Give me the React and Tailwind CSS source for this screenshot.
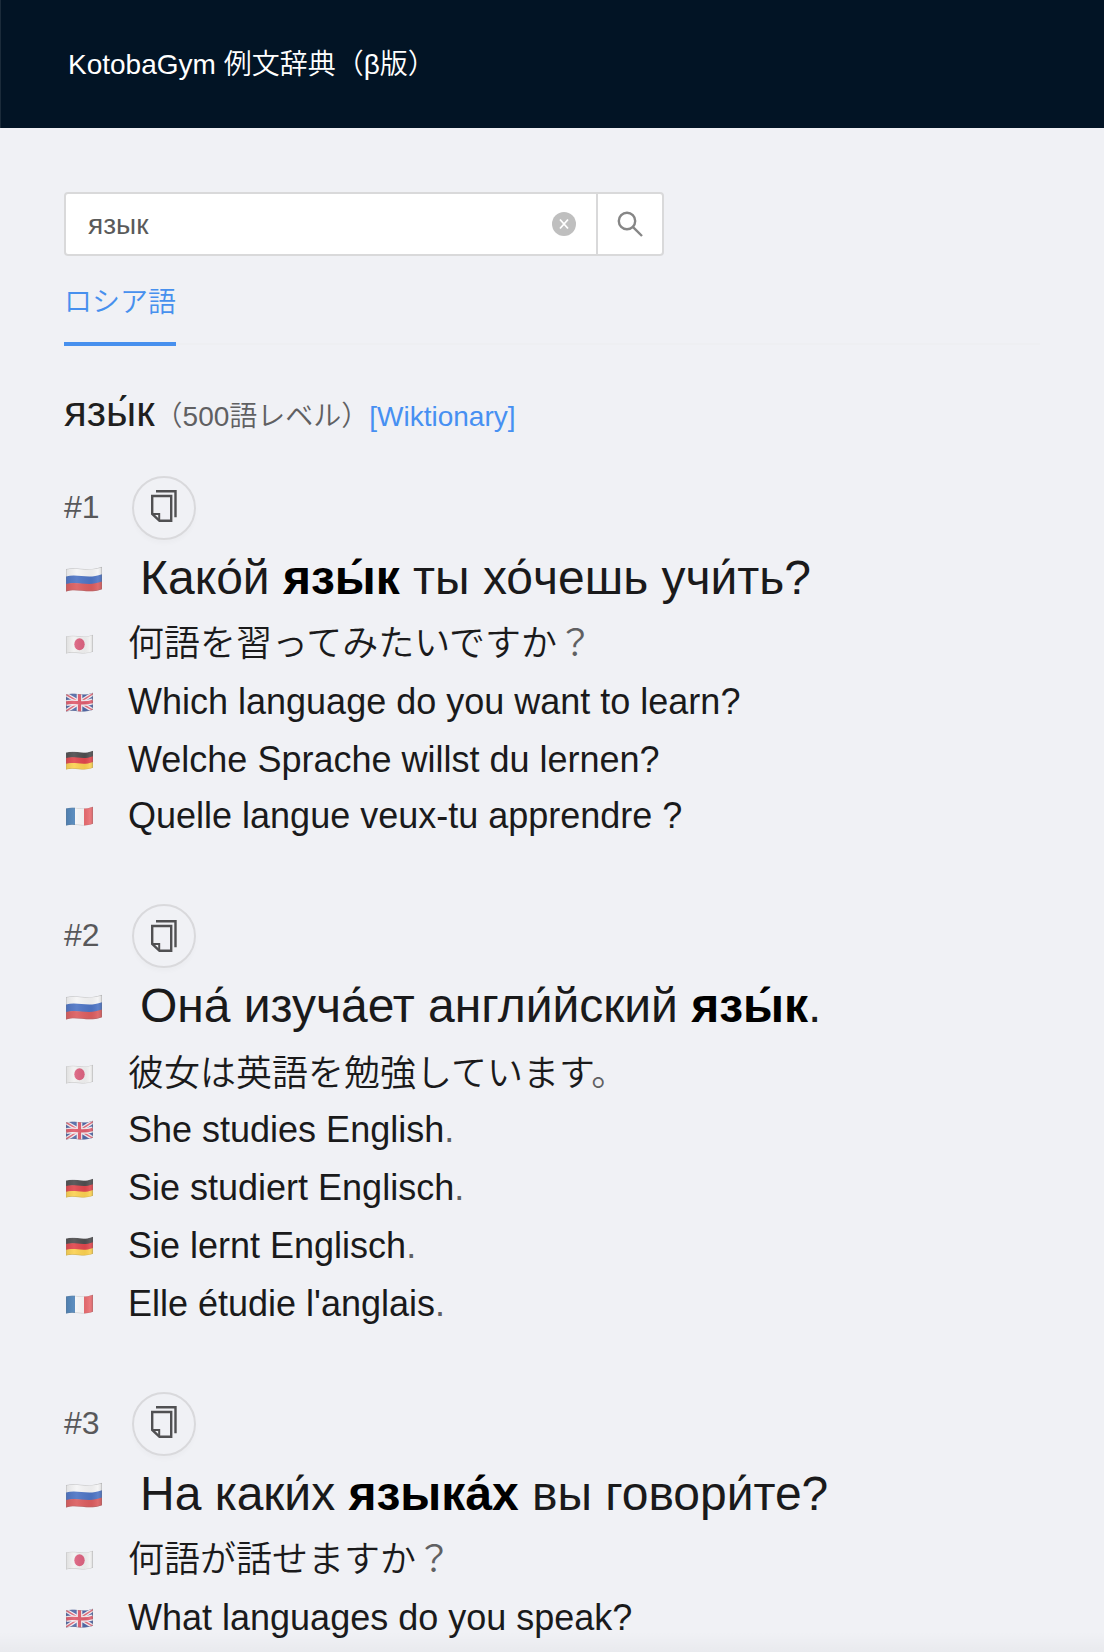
import { useState } from "react";

const entries = [
  {
    id: 1,
    russian: [{ text: "Како́й " }, { text: "язы́к", bold: true }, { text: " ты хо́чешь учи́ть?" }],
    lines: [
      { lang: "jp", text: "何語を習ってみたいですか", end: "？" },
      { lang: "gb", text: "Which language do you want to learn?" },
      { lang: "de", text: "Welche Sprache willst du lernen?" },
      { lang: "fr", text: "Quelle langue veux-tu apprendre ?", className: "-mt-0.5" },
    ],
  },
  {
    id: 2,
    russian: [{ text: "Она́ изуча́ет англи́йский " }, { text: "язы́к", bold: true }, { text: "." }],
    lines: [
      { lang: "jp", text: "彼女は英語を勉強しています", end: "。", className: "mt-0.5 -mb-0.5" },
      { lang: "gb", text: "She studies English", end: "." },
      { lang: "de", text: "Sie studiert Englisch", end: "." },
      { lang: "de", text: "Sie lernt Englisch", end: "." },
      { lang: "fr", text: "Elle étudie l'anglais", end: "." },
    ],
  },
  {
    id: 3,
    russian: [{ text: "На каки́х " }, { text: "языка́х", bold: true }, { text: " вы говори́те?" }],
    lines: [
      { lang: "jp", text: "何語が話せますか", end: "？" },
      { lang: "gb", text: "What languages do you speak?" },
    ],
  },
];

const wave = "M0 3c12-3 22 3 36-2.200v21.500c-14 5.200-24-1.500-36 2.200z";

const stripes = {
  ru: ["#f4f4f5", "#4a72c4", "#db5a5c"],
  de: ["#4b4a4c", "#e0434a", "#fbd04e"],
};

function FlagBody({ lang }) {
  if (stripes[lang]) {
    return stripes[lang].map((color, i) => (
      <path key={color} d={`M0 ${3 + i * 7.1}c12-3 22 3 36-2.2v8c-14 5.2-24-1.5-36 2.2z`} fill={color} />
    ));
  }

  if (lang === "fr") {
    return (
      <>
        <path d="M0 0h12v25H0z" fill="#4c82b8" />
        <path d="M12 0h12v25H12z" fill="#f8f8f9" />
        <path d="M24 0h12v25H24z" fill="#e96a6e" />
      </>
    );
  }

  if (lang === "jp") {
    return (
      <>
        <path d="M0 0h36v25H0z" fill="#f1f1f1" />
        <ellipse cx="18" cy="12.8" rx="6.9" ry="7.5" fill="#dc5f7d" />
      </>
    );
  }

  return (
    <>
      <path d="M0 0h36v26H0z" fill="#4f66a6" />
      <path d="M0 3l36 20M0 24L36 2" stroke="#f4eef2" strokeWidth="5" />
      <path d="M0 3l36 20M0 24L36 2" stroke="#df6475" strokeWidth="1.8" />
      <path d="M18 0v26M0 13.800c12-3 22 3 36-2.200" stroke="#f4eef2" strokeWidth="7.5" fill="none" />
      <path d="M18 0v26M0 13.800c12-3 22 3 36-2.200" stroke="#df5a6b" strokeWidth="4.2" fill="none" />
    </>
  );
}

function Flag({ lang, className }) {
  return (
    <svg viewBox="0 0 36 25" className={className} preserveAspectRatio="none">
      <defs>
        <clipPath id="flag-wave">
          <path d={wave} />
        </clipPath>
        <linearGradient id="flag-shade">
          <stop offset="0" stopColor="#555" stopOpacity="0.12" />
          <stop offset="0.3" stopColor="#fff" stopOpacity="0.1" />
          <stop offset="0.7" stopColor="#555" stopOpacity="0.06" />
          <stop offset="0.88" stopColor="#fff" stopOpacity="0.1" />
          <stop offset="1" stopColor="#555" stopOpacity="0.2" />
        </linearGradient>
      </defs>
      <g clipPath="url(#flag-wave)">
        <FlagBody lang={lang} />
        <path d={wave} fill="url(#flag-shade)" stroke="#777" strokeOpacity="0.4" />
      </g>
    </svg>
  );
}

function CopyButton({ className }) {
  return (
    <button className={`flex h-16 w-16 justify-center rounded-full border-2 border-[#d9d9dc] shadow-[0_4px_4px_rgba(0,0,0,0.02)] ${className}`}>
      <svg width="26" height="32" viewBox="0 0 26 32" fill="none" stroke="#505052" strokeWidth="2.4">
        <path d="M5 1.200h19.500v26" />
        <path d="M1.200 6h19v24.800H8.500L1.200 24z" />
        <path d="M1.200 24h7v6.500" strokeWidth="2" />
      </svg>
    </button>
  );
}

function Entry({ entry }) {
  return (
    <section className="mb-[60px]">
      <div className="flex h-16">
        <span className="w-[68px] text-[32px] leading-[62px] text-[#58585a]">#{entry.id}</span>
        <CopyButton className={entry.id === 2 ? "pt-3.5" : "pt-3"} />
      </div>

      <div className="flex h-[74px] items-center">
        <Flag lang="ru" className="mt-1 mr-[38px] ml-0.5 h-[26px] w-9" />
        <p className="mt-0.5 text-[48px] leading-[74px] tracking-[-0.015px] whitespace-pre text-[#1a1a1b]">
          {entry.russian.map((part) =>
            part.bold ? (
              <b key={part.text} className="font-bold text-black">{part.text}</b>
            ) : (
              <span key={part.text}>{part.text}</span>
            )
          )}
        </p>
      </div>

      {entry.lines.map((line) => (
        <div key={line.text} className={`flex h-[58px] items-center ${line.className || ""}`}>
          <Flag lang={line.lang} className="mt-0.5 mr-[35px] ml-0.5 h-[20px] w-[27px]" />
          <p className="mt-0.5 text-[36px] leading-[58px] whitespace-pre text-[#1a1a1b]">
            {line.text}
            <span className="text-[#606062]">{line.end}</span>
          </p>
        </div>
      ))}
    </section>
  );
}

export default function App() {
  const [query, setQuery] = useState("язык");

  return (
    <div className="relative h-[1652px] overflow-hidden bg-[#f0f1f5] font-['Liberation_Sans','Noto_Sans_CJK_JP',sans-serif] font-[350]">
      <header className="flex h-32 items-center border-l border-[#1b2b3a] bg-[#021425] pl-[67px]">
        <h1 className="pt-0.5 text-[28px] leading-[128px] text-white">KotobaGym 例文辞典（β版）</h1>
      </header>

      <main className="px-16 pt-16">
        <div className="flex h-16 w-[600px] rounded border-2 border-[#d9d9da] bg-white">
          <input
            value={query}
            onChange={(e) => setQuery(e.target.value)}
            className="w-[460px] pt-0.5 pl-[22px] text-[28px] text-[#5a5a5a] outline-none"
          />
          <button onClick={() => setQuery("")} className="flex w-[70px] items-center pl-[26px]">
            <svg width="24" height="24" viewBox="0 0 24 24">
              <circle cx="12" cy="12" r="12" fill="#bfbfbf" />
              <path d="M8 7.500l8 9M16 7.500l-8 9" stroke="#fff" strokeWidth="1.800" />
            </svg>
          </button>
          <button className="flex flex-1 items-center justify-center border-l-2 border-[#d9d9da]">
            <svg width="26" height="26" viewBox="0 0 26 26" fill="none" stroke="#868686" strokeWidth="2.400">
              <circle cx="10" cy="10" r="8.200" />
              <path d="M15.800 15.800L25 25" />
            </svg>
          </button>
        </div>

        <nav className="flex h-[90px] items-end">
          <a className="h-[74px] border-b-4 border-[#4790ee] text-[28px] leading-[62px] text-[#4790ee]">
            ロシア語
          </a>
          <div className="mb-px h-0.5 flex-1 bg-[#eeeff2]" />
        </nav>

        <div className="mt-[34px] mb-[32px] flex h-16 items-baseline leading-[64px]">
          <h2 className="text-[42px] text-[#1f1f20]">язы́к</h2>
          <span className="text-[28px] text-[#606062]">（500語レベル）</span>
          <a className="text-[28px] text-[#4790f2]">[Wiktionary]</a>
        </div>

        {entries.map((entry) => (
          <Entry key={entry.id} entry={entry} />
        ))}
      </main>

      <div className="absolute inset-x-0 bottom-0 h-5 bg-linear-to-t from-black/3 to-transparent" />
    </div>
  );
}
